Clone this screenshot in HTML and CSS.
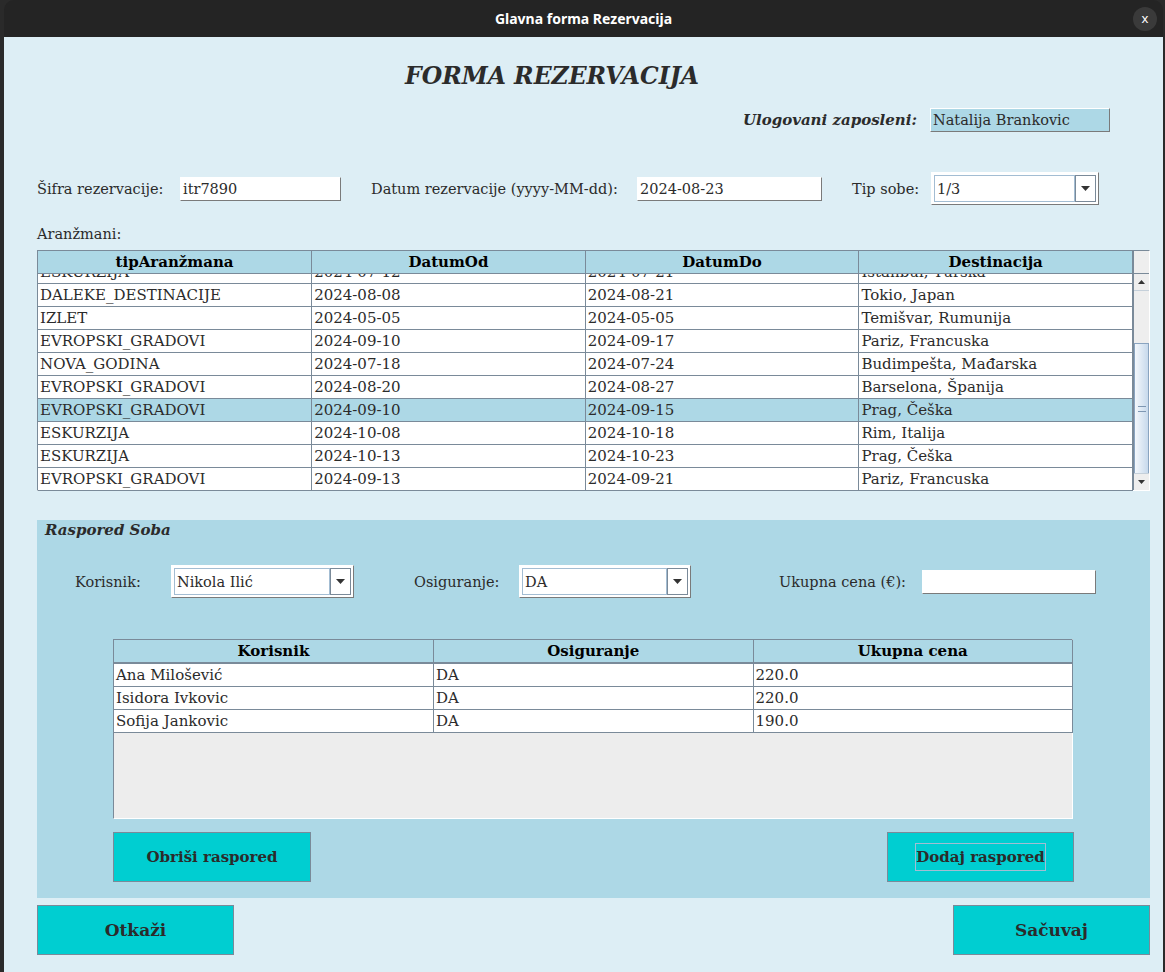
FILE: index.html
```html
<!DOCTYPE html>
<html lang="sr">
  <head>
    <meta charset="UTF-8" />
    <meta name="viewport" content="width=device-width, initial-scale=1.0" />
    <title>Glavna forma Rezervacija</title>
    <link rel="stylesheet" href="styles.css">
  </head>
  <body>
    <div class="window">
      <header class="titlebar">
        <span class="titlebar-text">Glavna forma Rezervacija</span>
        <span class="close">x</span>
      </header>

      <main class="content">
        <h1 class="form-title">FORMA REZERVACIJA</h1>

        <div class="user-row">
          <span class="user-label">Ulogovani zaposleni:</span>
          <span class="user-field">Natalija Brankovic</span>
        </div>

        <div class="fields-row">
          <span class="lbl lbl-sifra">Šifra rezervacije:</span>
          <span class="field f-sifra">itr7890</span>
          <span class="lbl lbl-datum">Datum rezervacije (yyyy-MM-dd):</span>
          <span class="field f-datum">2024-08-23</span>
          <span class="lbl lbl-tip">Tip sobe:</span>
          <div class="combo c-tip">
            <span class="combo-text">1/3</span>
            <span class="combo-btn"><svg width="9" height="5" viewBox="0 0 9 5"><path d="M0 0h9L4.5 5z" fill="#333"/></svg></span>
          </div>
        </div>

        <div class="section-label">Aranžmani:</div>

        <div class="grid">
          <div class="grid-main">
            <table class="tbl head">
              <tr>
                <th>tipAranžmana</th>
                <th>DatumOd</th>
                <th>DatumDo</th>
                <th>Destinacija</th>
              </tr>
            </table>
            <div class="viewport">
              <table class="tbl body scrolled">
                <tr><td>ESKURZIJA</td><td>2024-07-12</td><td>2024-07-21</td><td>Istanbul, Turska</td></tr>
                <tr><td>DALEKE_DESTINACIJE</td><td>2024-08-08</td><td>2024-08-21</td><td>Tokio, Japan</td></tr>
                <tr><td>IZLET</td><td>2024-05-05</td><td>2024-05-05</td><td>Temišvar, Rumunija</td></tr>
                <tr><td>EVROPSKI_GRADOVI</td><td>2024-09-10</td><td>2024-09-17</td><td>Pariz, Francuska</td></tr>
                <tr><td>NOVA_GODINA</td><td>2024-07-18</td><td>2024-07-24</td><td>Budimpešta, Mađarska</td></tr>
                <tr><td>EVROPSKI_GRADOVI</td><td>2024-08-20</td><td>2024-08-27</td><td>Barselona, Španija</td></tr>
                <tr class="selected"><td>EVROPSKI_GRADOVI</td><td>2024-09-10</td><td>2024-09-15</td><td>Prag, Češka</td></tr>
                <tr><td>ESKURZIJA</td><td>2024-10-08</td><td>2024-10-18</td><td>Rim, Italija</td></tr>
                <tr><td>ESKURZIJA</td><td>2024-10-13</td><td>2024-10-23</td><td>Prag, Češka</td></tr>
                <tr><td>EVROPSKI_GRADOVI</td><td>2024-09-13</td><td>2024-09-21</td><td>Pariz, Francuska</td></tr>
              </table>
            </div>
          </div>
          <div class="scroll-col">
            <div class="corner"></div>
            <div class="scrollbar">
              <span class="sb-btn"><svg width="7" height="4" viewBox="0 0 7 4"><path d="M0 4h7L3.5 0z" fill="#333"/></svg></span>
              <div class="sb-track">
                <div class="sb-thumb"><span class="grip"></span></div>
              </div>
              <span class="sb-btn"><svg width="7" height="4" viewBox="0 0 7 4"><path d="M0 0h7L3.5 4z" fill="#333"/></svg></span>
            </div>
          </div>
        </div>

        <section class="panel">
          <div class="panel-title">Raspored Soba</div>

          <div class="panel-row">
            <span class="lbl lbl-kor">Korisnik:</span>
            <div class="combo c-kor">
              <span class="combo-text">Nikola Ilić</span>
              <span class="combo-btn"><svg width="9" height="5" viewBox="0 0 9 5"><path d="M0 0h9L4.5 5z" fill="#333"/></svg></span>
            </div>
            <span class="lbl lbl-osi">Osiguranje:</span>
            <div class="combo c-osi">
              <span class="combo-text">DA</span>
              <span class="combo-btn"><svg width="9" height="5" viewBox="0 0 9 5"><path d="M0 0h9L4.5 5z" fill="#333"/></svg></span>
            </div>
            <span class="lbl lbl-cena">Ukupna cena (€):</span>
            <span class="field f-cena"></span>
          </div>

          <div class="inner-grid">
            <table class="tbl head">
              <tr><th>Korisnik</th><th>Osiguranje</th><th>Ukupna cena</th></tr>
            </table>
            <table class="tbl body">
              <tr><td>Ana Milošević</td><td>DA</td><td>220.0</td></tr>
              <tr><td>Isidora Ivkovic</td><td>DA</td><td>220.0</td></tr>
              <tr><td>Sofija Jankovic</td><td>DA</td><td>190.0</td></tr>
            </table>
          </div>

          <div class="panel-buttons">
            <button class="btn btn-obrisi">Obriši raspored</button>
            <button class="btn btn-dodaj"><span class="focus">Dodaj raspored</span></button>
          </div>
        </section>

        <div class="actions">
          <button class="btn btn-big">Otkaži</button>
          <button class="btn btn-big">Sačuvaj</button>
        </div>
      </main>
    </div>
  </body>
</html>
```

FILE: styles.css
```css
body {
  margin: 0;
  width: 1165px;
  height: 972px;
  overflow: hidden;
  background-color: #2a2a2a;
  font-family: "DejaVu Serif", "Liberation Serif", serif;
  font-size: 14.5px;
  color: #2b2b2b;
}
.window {
  margin-left: 4px;
  width: 1159px;
  height: 972px;
  border-radius: 10px 10px 0 0;
  overflow: hidden;
  display: flex;
  flex-direction: column;
}
.titlebar {
  height: 37px;
  flex: none;
  background-color: #242424;
  display: flex;
  align-items: center;
  justify-content: center;
  position: relative;
}
.titlebar-text {
  color: #fff;
  font-family: "Noto Sans", sans-serif;
  font-weight: bold;
  font-size: 14px;
}
.close {
  position: absolute;
  right: 6px;
  top: 7px;
  width: 24px;
  height: 24px;
  border-radius: 50%;
  background-color: #3a3a3a;
  color: #fff;
  font-family: "Noto Sans", sans-serif;
  font-size: 13px;
  line-height: 22px;
  text-align: center;
}
.content {
  flex: 1;
  background-color: #ddeef5;
  padding: 0 13px 0 33px;
  display: flex;
  flex-direction: column;
}
.form-title {
  margin: 25px 0 0 368px;
  font-size: 23.5px;
  line-height: 28px;
  font-style: italic;
  font-weight: bold;
  color: #2b2b2b;
}
.user-row {
  margin-top: 18px;
  display: flex;
  justify-content: flex-end;
  align-items: center;
  padding-right: 40px;
  gap: 13px;
}
.user-label {
  font-style: italic;
  font-weight: bold;
  font-size: 15px;
}
.user-field {
  width: 180px;
  height: 24px;
  box-sizing: border-box;
  background-color: #add8e6;
  border: 1px solid #fff;
  border-right-color: #7a7a7a;
  border-bottom-color: #7a7a7a;
  padding: 0 2px;
  line-height: 22px;
}
.fields-row {
  margin-top: 40px;
  display: flex;
  align-items: center;
  height: 33px;
}
.lbl {
  flex: none;
  white-space: nowrap;
}
.lbl-sifra { width: 143px; }
.lbl-datum { width: 266px; margin-left: 30px; }
.lbl-tip { width: 79px; margin-left: 30px; }
.field {
  flex: none;
  height: 24px;
  box-sizing: border-box;
  background-color: #fff;
  border: 1px solid #fff;
  border-right-color: #7a7a7a;
  border-bottom-color: #7a7a7a;
  padding: 0 2px;
  line-height: 22px;
}
.f-sifra { width: 161px; }
.f-datum { width: 185px; }
.combo {
  flex: none;
  height: 33px;
  box-sizing: border-box;
  background-color: #fff;
  border: 1px solid #fff;
  border-right-color: #7a7a7a;
  border-bottom-color: #7a7a7a;
  padding: 2px;
  display: flex;
}
.combo-text {
  flex: 1;
  border: 1px solid #a3bdd3;
  padding: 0 2px;
  line-height: 26px;
  overflow: hidden;
  white-space: nowrap;
}
.combo-btn {
  width: 21px;
  box-sizing: border-box;
  border: 1px solid #7a8a99;
  display: flex;
  align-items: center;
  justify-content: center;
}
.c-tip { width: 168px; }
.section-label {
  margin-top: 20px;
  line-height: 18px;
}
.grid {
  margin-top: 7px;
  width: 1113px;
  height: 241px;
  box-sizing: border-box;
  border: 1px solid #7a8a99;
  border-right-color: #fff;
  border-bottom-color: #fff;
  display: flex;
  background-color: #fff;
}
.grid-main {
  width: 1096px;
}
.tbl {
  border-collapse: collapse;
  table-layout: fixed;
  width: 100%;
}
.tbl th,
.tbl td {
  border: 1px solid #7a8a99;
  padding: 0 2px;
  height: 22px;
  white-space: nowrap;
  overflow: hidden;
  text-align: left;
}
.tbl th {
  background-color: #add8e6;
  color: #000;
  font-size: 15px;
  text-align: center;
  border-top: none;
}
.tbl td {
  background-color: #fff;
  font-size: 15px;
}
.tbl th:first-child,
.tbl td:first-child {
  border-left: none;
}
.tbl .selected td {
  background-color: #add8e6;
}
.viewport {
  height: 217px;
  overflow: hidden;
}
.scrolled {
  margin-top: -14px;
}
.scroll-col {
  width: 15px;
  display: flex;
  flex-direction: column;
  border-left: 1px solid #7a8a99;
}
.corner {
  height: 22px;
  background-color: #eee;
  border-bottom: 1px solid #7a8a99;
}
.scrollbar {
  flex: 1;
  display: flex;
  flex-direction: column;
  background-color: #eee;
}
.sb-btn {
  height: 16px;
  flex: none;
  display: flex;
  align-items: center;
  justify-content: center;
  background-color: #eee;
  border-bottom: 1px solid #c5d0da;
}
.sb-btn:last-child {
  border-bottom: none;
  border-top: 1px solid #c5d0da;
}
.sb-track {
  flex: 1;
  padding-top: 52px;
  display: flex;
  flex-direction: column;
}
.sb-thumb {
  flex: 1;
  background: linear-gradient(to right, #f4f8fc, #c7d9ec);
  border: 1px solid #8aa4c0;
  border-bottom: none;
  display: flex;
  align-items: center;
  justify-content: center;
}
.grip {
  width: 8px;
  height: 4px;
  border-top: 1px solid #7e97b3;
  border-bottom: 1px solid #7e97b3;
}
.panel {
  margin-top: 29px;
  width: 1113px;
  height: 378px;
  box-sizing: border-box;
  background-color: #add8e6;
  padding: 0 76px 16px;
  display: flex;
  flex-direction: column;
}
.panel-title {
  margin-left: -68px;
  font-style: italic;
  font-weight: bold;
  font-size: 15px;
  line-height: 20px;
}
.panel-row {
  margin-top: 25px;
  margin-left: -38px;
  display: flex;
  align-items: center;
  height: 33px;
}
.lbl-kor { width: 96px; }
.lbl-osi { width: 105px; margin-left: 60px; }
.lbl-cena { width: 143px; margin-left: 88px; }
.c-kor { width: 183px; }
.c-osi { width: 172px; }
.f-cena { width: 174px; }
.inner-grid {
  margin-top: 41px;
  width: 960px;
  height: 180px;
  box-sizing: border-box;
  border: 1px solid #7a8a99;
  border-right-color: #fff;
  border-bottom-color: #fff;
  background-color: #ededed;
}
.inner-grid .tbl {
  width: 959px;
}
.inner-grid .tbl td:last-child,
.inner-grid .tbl th:last-child {
  border-right: 1px solid #7a8a99;
}
.panel-buttons {
  margin-top: 13px;
  display: flex;
  justify-content: space-between;
}
.btn {
  height: 50px;
  box-sizing: border-box;
  background-color: #00ced1;
  border: 1px solid #7a8a99;
  font-family: "DejaVu Serif", "Liberation Serif", serif;
  font-weight: bold;
  font-size: 15px;
  color: #2b2b2b;
  padding: 0;
}
.btn-obrisi { width: 198px; }
.btn-dodaj { width: 187px; }
.focus {
  border: 1px solid #a3bdd3;
  padding: 4px 0;
}
.actions {
  margin-top: 7px;
  width: 1113px;
  display: flex;
  justify-content: space-between;
}
.btn-big {
  width: 197px;
  font-size: 17px;
}
```
